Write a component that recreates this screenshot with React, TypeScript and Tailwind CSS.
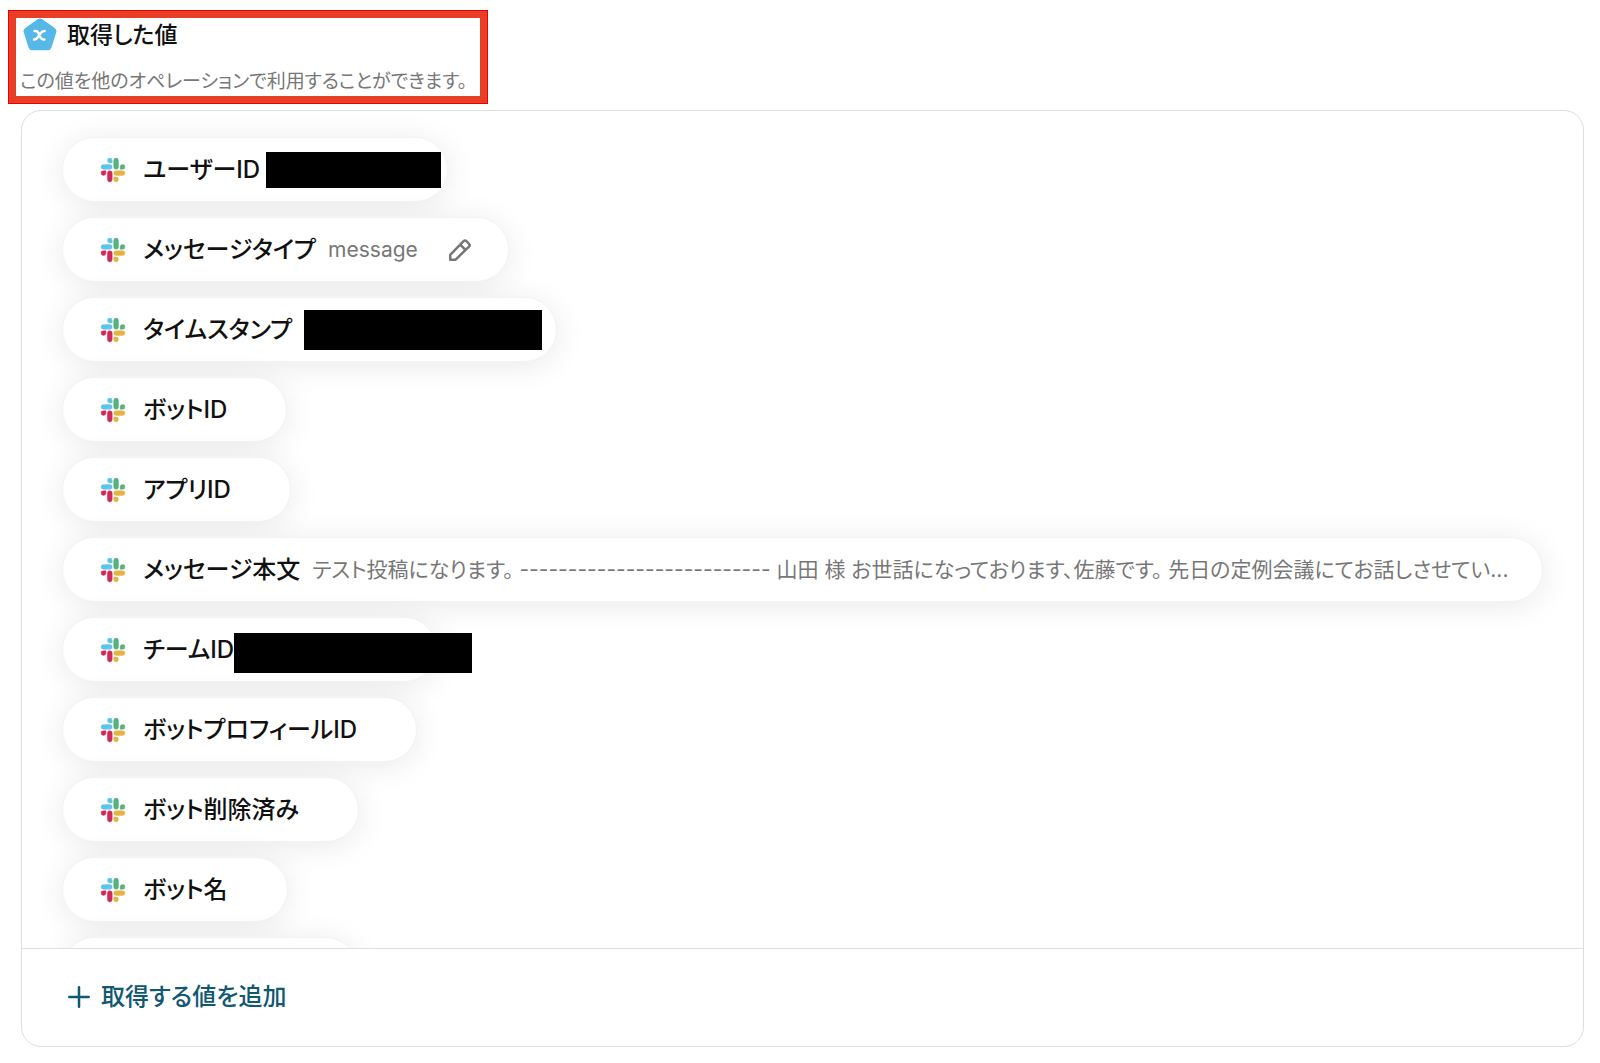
import React from 'react';
import { clsx } from 'clsx';

interface ValueItem {
  label: string;
  value?: string;
  editable?: boolean;
  mask?: string;
  className?: string;
}

const items: ValueItem[] = [
  { label: 'ユーザーID', mask: 'ml-1.5 h-9 w-[175px]', className: 'pr-1.5' },
  { label: 'メッセージタイプ', value: 'message', editable: true, className: 'pr-9' },
  { label: 'タイムスタンプ', mask: 'ml-3 h-10 w-[238px]', className: 'pr-3.5' },
  { label: 'ボットID' },
  { label: 'アプリID' },
  {
    label: 'メッセージ本文',
    value:
      'テスト投稿になります。 -------------------------- 山田 様 お世話になっております、佐藤です。 先日の定例会議にてお話しさせてい...',
    className: 'w-full pr-5',
  },
  { label: 'チームID', mask: 'mt-1.5 -mr-9 h-10 w-[238px]', className: 'pr-0' },
  { label: 'ボットプロフィールID' },
  { label: 'ボット削除済み' },
  { label: 'ボット名' },
];

const pillStyle =
  'h-[65px] shrink-0 rounded-full border border-[#f3f3f3] bg-white shadow-[0_4px_32px_rgba(0,0,0,0.09)]';

function SlackIcon() {
  return (
    <svg viewBox="0 0 24 24" className="h-6 w-6 shrink-0 overflow-visible" strokeWidth="0.4" aria-hidden="true">
      <path fill="#5fc3ee" stroke="#5fc3ee" d="M8.8 0a2.4 2.4 0 1 0 0 4.9h2.4V2.4A2.4 2.4 0 0 0 8.8 0Zm0 6.5H2.4a2.4 2.4 0 0 0 0 4.8h6.4a2.4 2.4 0 0 0 0-4.8Z" />
      <path fill="#56b27f" stroke="#56b27f" d="M24 8.900a2.4 2.4 0 1 0-4.900 0v2.400h2.500A2.4 2.4 0 0 0 24 8.900Zm-6.500 0V2.400a2.4 2.4 0 0 0-4.800 0v6.500a2.4 2.4 0 0 0 4.800 0Z" />
      <path fill="#e6b340" stroke="#e6b340" d="M15.1 24a2.4 2.4 0 1 0 0-4.900h-2.400v2.500a2.4 2.4 0 0 0 2.400 2.400Zm0-6.500h6.500a2.4 2.4 0 0 0 0-4.800h-6.500a2.4 2.4 0 0 0 0 4.800Z" />
      <path fill="#d0295a" stroke="#d0295a" d="M0 15.1a2.4 2.4 0 1 0 4.900 0v-2.400H2.400A2.4 2.4 0 0 0 0 15.100Zm6.400 0v6.500a2.4 2.4 0 0 0 4.800 0v-6.500a2.4 2.4 0 0 0-4.800 0Z" />
    </svg>
  );
}

function ValuePill({ item }: { item: ValueItem }) {
  return (
    <li className={clsx('flex max-w-full items-center pl-[38px]', pillStyle, item.className ?? 'pr-[59px]')}>
      <SlackIcon />
      <span className="ml-[18px] shrink-0 text-[24px] leading-8 font-medium whitespace-nowrap text-[#111]">
        {item.label}
      </span>
      {item.value && (
        <span className="ml-3 min-w-0 truncate text-[21px] leading-8 text-[#777]">{item.value}</span>
      )}
      {item.mask && <span className={clsx('shrink-0 bg-black', item.mask)} />}
      {item.editable && (
        <button type="button" aria-label="編集" className="ml-[30px] shrink-0 text-[#777]">
          <svg viewBox="0 0 24 24" className="h-6 w-6" fill="none" stroke="currentColor" strokeWidth="2.5" strokeLinejoin="round">
            <path d="M2.2 21.8v-4.9L15.6 3.2a2 2 0 0 1 2.8 0l2.6 2.6a2 2 0 0 1 0 2.8L7.4 21.8Z" />
            <path d="m12.2 6.6 5.4 5.4" />
          </svg>
        </button>
      )}
    </li>
  );
}

export default function App() {
  return (
    <main
      lang="ja"
      className="bg-white pt-[10px] pr-4 pb-4 pl-2 font-['Inter','Noto_Sans_CJK_JP',sans-serif] [font-feature-settings:'palt']"
    >
      <header className="h-[94px] w-[480px] border-8 border-[#e93e26] pl-1 outline-1 -outline-offset-1 outline-[#e60000]">
        <div className="flex items-center gap-2.5">
          <svg viewBox="0 0 34 34" className="ml-[3px] h-[34px] w-[34px]" aria-hidden="true">
            <path
              fill="#56b8e6"
              d="M14.6 1.3a4 4 0 0 1 4.8 0l12.3 8.6a4 4 0 0 1 1.5 4.6l-4.7 15a4 4 0 0 1-3.8 2.7H9.3a4 4 0 0 1-3.8-2.7l-4.7-15a4 4 0 0 1 1.5-4.6Z"
            />
            <path
              d="M11.6 13h.9c1.4 0 2.1.6 2.7 1.8l2.5 5c.6 1.2 1.3 1.8 2.600 1.800h1.100M21.600 13c-1.800 0-2.800.6-3.800 2l-3.200 4.400c-1.100 1.500-2 2.100-3.500 2.200"
              fill="none"
              stroke="#fff"
              strokeWidth="2.5"
              strokeLinecap="round"
            />
          </svg>
          <h1 className="text-[23px] leading-8 font-medium text-[#111]">取得した値</h1>
        </div>
        <p className="mt-[18px] text-[19px] leading-6 whitespace-nowrap text-[#777]">
          この値を他のオペレーションで利用することができます。
        </p>
      </header>

      <section className="mt-1.5 ml-[13px] overflow-hidden rounded-[20px] border border-[#dedede]">
        <ul className="flex h-[837px] flex-col items-start gap-[15px] overflow-hidden pt-[26px] pr-10 pl-10">
          {items.map((item) => (
            <ValuePill key={item.label} item={item} />
          ))}
          <li className={clsx('w-[296px]', pillStyle)} />
        </ul>
        <div className="flex h-[98px] items-center border-t border-[#dedede] pb-0.5 pl-[46px]">
          <button type="button" className="flex items-center gap-[11px] text-[24px] leading-8 font-medium text-[#115873]">
            <svg viewBox="0 0 22 22" className="h-[22px] w-[22px]" fill="none" stroke="currentColor" strokeWidth="2.5" strokeLinecap="round" aria-hidden="true">
              <path d="M11 1.3v19.4M1.3 11h19.4" />
            </svg>
            取得する値を追加
          </button>
        </div>
      </section>
    </main>
  );
}
